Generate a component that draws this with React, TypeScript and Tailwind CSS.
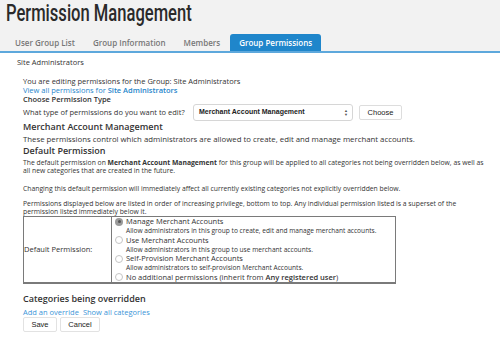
import React from "react";

function Radio({ checked }: { checked?: boolean }) {
  return checked ? (
    <span className="flex h-[8px] w-[8px] shrink-0 items-center justify-center rounded-full bg-[#9a9a9a]">
      <span className="h-[3px] w-[3px] rounded-full bg-[#555]" />
    </span>
  ) : (
    <span className="h-[8px] w-[8px] shrink-0 rounded-full border border-[#c4c4c4] bg-white" />
  );
}

const options = [
  { title: "Manage Merchant Accounts", desc: "Allow administrators in this group to create, edit and manage merchant accounts.", checked: true },
  { title: "Use Merchant Accounts", desc: "Allow administrators in this group to use merchant accounts." },
  { title: "Self-Provision Merchant Accounts", desc: "Allow administrators to self-provision Merchant Accounts." },
];

export default function App() {
  return (
    <div className="h-[349px] w-[500px] overflow-hidden bg-white font-['Open_Sans',sans-serif] text-[#333]">
      <div className="h-[53px] border-b-2 border-[#5da8dc] bg-[#f2f2f2]">
        <div className="h-[34px] pl-[6px]">
          <span className="block origin-left scale-x-[0.69] whitespace-nowrap font-['Roboto',sans-serif] text-[24px] font-medium leading-[27px] text-[#2a2a2a]">
            Permission Management
          </span>
        </div>
        <div className="flex h-[17px] items-end pl-[6px] text-[8px] font-semibold">
          <div className="flex h-[17px] items-center px-[9px] text-[#777]">User Group List</div>
          <div className="flex h-[17px] items-center px-[9px] text-[#777]">Group Information</div>
          <div className="flex h-[17px] items-center px-[9px] text-[#777]">Members</div>
          <div className="ml-[1px] flex h-[17px] items-center rounded-t-[3px] bg-[#1f86cb] px-[9px] text-white">Group Permissions</div>
        </div>
      </div>

      <div className="pl-[17px] pt-[4px] text-[7.5px] leading-[10px]">Site Administrators</div>

      <div className="pl-[23px] pr-[12px] pt-[10px] text-[7.5px]">
        <div className="leading-[9px]">You are editing permissions for the Group: Site Administrators</div>
        <div className="leading-[9px] text-[#1f86cb]">
          View all permissions for <span className="font-semibold">Site Administrators</span>
        </div>
        <div className="font-semibold leading-[9px]">Choose Permission Type</div>
        <div className="flex h-[17px] items-center">
          <span className="w-[170px]">What type of permissions do you want to edit?</span>
          <div className="flex h-[17px] w-[160px] items-center justify-between rounded-[3px] border border-[#d6d6d6] bg-white pl-[5px] pr-[4px] font-['Liberation_Sans',sans-serif] text-[7px] font-bold text-[#222]">
            <span>Merchant Account Management</span>
            <span className="flex flex-col text-[4px] leading-[4px] text-[#555]">
              <span>▲</span>
              <span>▼</span>
            </span>
          </div>
          <div className="ml-[6px] flex h-[15px] w-[43px] items-center justify-center rounded-[2px] border border-[#ddd] bg-white font-['Liberation_Sans',sans-serif] text-[7.5px] text-[#222]">
            Choose
          </div>
        </div>
        <div className="text-[9px] font-semibold leading-[11px]">Merchant Account Management</div>
        <div className="mt-[2px] text-[7.8px] leading-[11px]">These permissions control which administrators are allowed to create, edit and manage merchant accounts.</div>
        <div className="text-[9px] font-semibold leading-[11px]">Default Permission</div>

        <div className="mt-[3px] text-[6.8px] leading-[8px]">
          <p>
            The default permission on <b className="font-bold">Merchant Account Management</b> for this group will be applied to all categories not being overridden below, as well as all new categories that are created in the future.
          </p>
          <p className="mt-[10px]">Changing this default permission will immediately affect all currently existing categories not explicitly overridden below.</p>
          <p className="mt-[7px]">
            Permissions displayed below are listed in order of increasing privilege, bottom to top. Any individual permission listed is a superset of the permission listed immediately below it.
          </p>
        </div>

        <div className="flex w-[373px] border border-b-2 border-[#7a7a7a]">
          <div className="flex w-[88px] items-center border-r border-[#7a7a7a] text-[7.5px]">Default Permission:</div>
          <div className="flex flex-1 flex-col pl-[3px]">
            {options.map((o) => (
              <div key={o.title}>
                <div className="flex items-center gap-[3px] text-[7.5px] leading-[9.3px]">
                  <Radio checked={o.checked} />
                  <span>{o.title}</span>
                </div>
                <div className="pl-[11px] text-[6.6px] leading-[9.3px]">{o.desc}</div>
              </div>
            ))}
            <div className="flex items-center gap-[3px] text-[7.5px] leading-[9.3px]">
              <Radio />
              <span>
                No additional permissions (inherit from <span className="font-semibold">Any registered user</span>)
              </span>
            </div>
          </div>
        </div>

        <div className="mt-[8.5px] text-[9px] font-semibold leading-[11px]">Categories being overridden</div>
        <div className="mt-[3.5px] flex gap-[4px] leading-[10px] text-[#3a95d8]">
          <span>Add an override</span>
          <span>Show all categories</span>
        </div>
        <div className="flex gap-[3px] font-['Liberation_Sans',sans-serif] text-[7.5px] text-[#222]">
          <div className="flex h-[15px] w-[34px] items-center justify-center rounded-[2px] border border-[#e2e2e2] bg-white">Save</div>
          <div className="flex h-[15px] w-[40px] items-center justify-center rounded-[2px] border border-[#e2e2e2] bg-white">Cancel</div>
        </div>
      </div>
    </div>
  );
}
